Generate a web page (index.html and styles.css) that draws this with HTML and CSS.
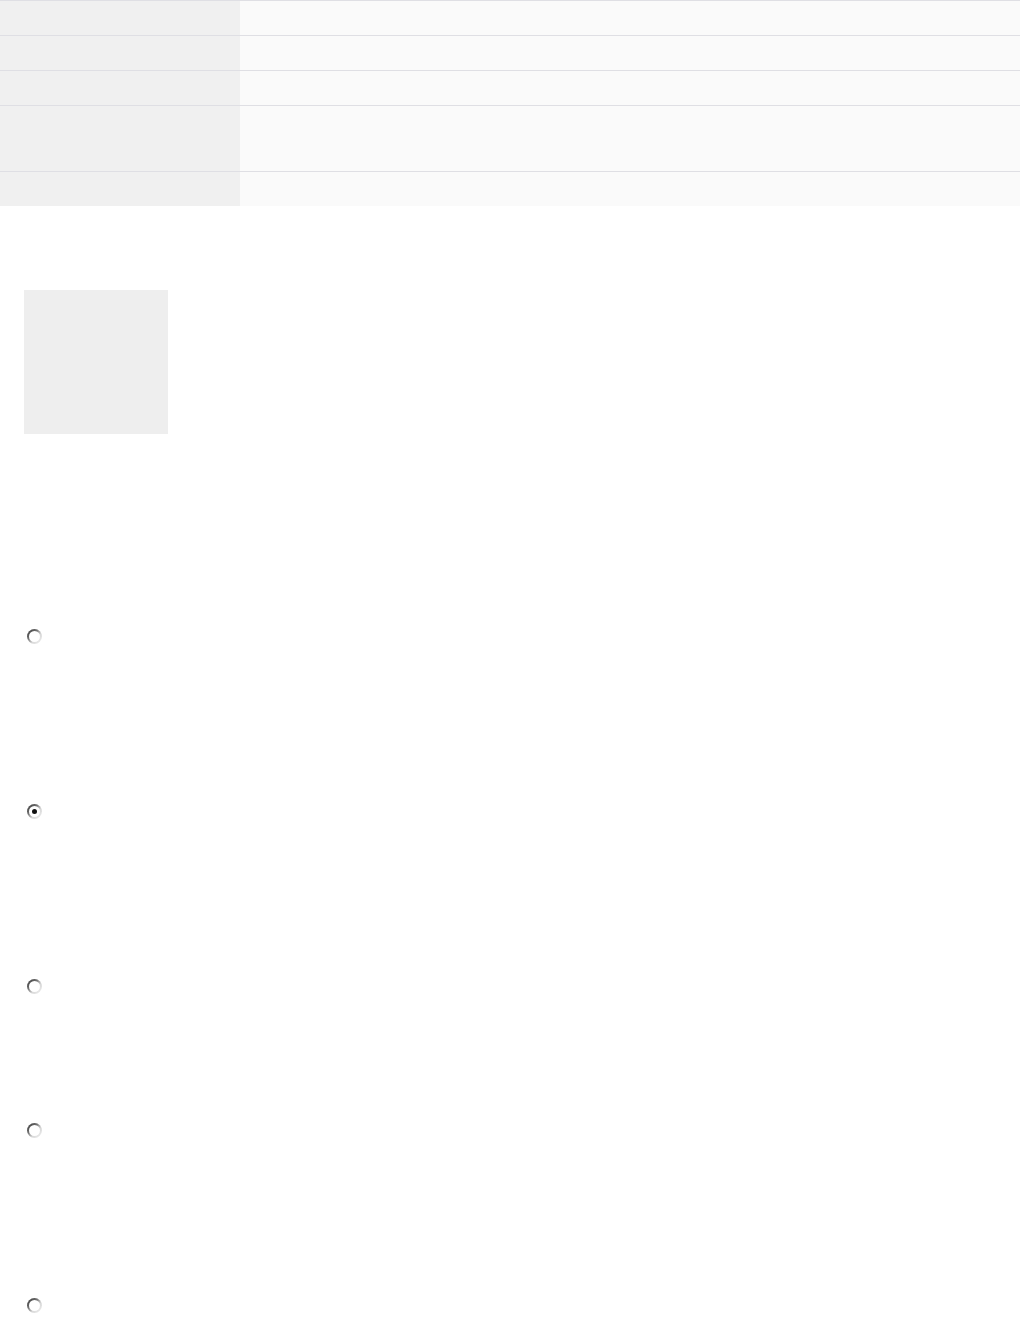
FILE: index.html
```html
<!DOCTYPE html>
<html lang="en">
<head>
  <meta charset="UTF-8" />
  <meta name="viewport" content="width=device-width, initial-scale=1.0"/>
  <title>Details</title>
  <link rel="stylesheet" href="styles.css">
</head>
<body>
  <div class="info-table">
    <div class="row"><div class="label"></div><div class="value"></div></div>
    <div class="row"><div class="label"></div><div class="value"></div></div>
    <div class="row"><div class="label"></div><div class="value"></div></div>
    <div class="row tall"><div class="label"></div><div class="value"></div></div>
    <div class="row"><div class="label"></div><div class="value"></div></div>
  </div>

  <div class="thumb"></div>

  <div class="options">
    <label class="option"><span class="radio"></span></label>
    <label class="option"><span class="radio checked"></span></label>
    <label class="option short"><span class="radio"></span></label>
    <label class="option"><span class="radio"></span></label>
    <label class="option last"><span class="radio"></span></label>
  </div>
</body>
</html>
```

FILE: styles.css
```css
body {
  font-family: 'Liberation Sans', Arial, sans-serif;
  background: #fff;
  margin: 0;
  padding: 0;
  color: #333;
}

.info-table {
  display: flex;
  flex-direction: column;
}

.row {
  display: grid;
  grid-template-columns: 240px 1fr;
  height: 35px;
  box-sizing: border-box;
  border-top: 1px solid #dfdfe4;
}

.row.tall {
  height: 66px;
}

.label {
  background: #f0f0f0;
}

.value {
  background: #fafafa;
}

.thumb {
  width: 144px;
  height: 144px;
  margin: 84px 0 0 24px;
  background: #eeeeee;
}

.options {
  margin-top: 195px;
  padding-left: 27px;
}

.option {
  display: block;
  height: 175px;
}

.option.short {
  height: 144px;
}

.option.last {
  height: auto;
}

.radio {
  display: block;
  position: relative;
  width: 15px;
  height: 15px;
  border-radius: 50%;
  background: linear-gradient(135deg, #333 0%, #6a6a6a 35%, #d8d8d8 62%, #f2f2f2 100%);
}

.radio::after {
  content: '';
  position: absolute;
  top: 2px;
  left: 2px;
  width: 11px;
  height: 11px;
  border-radius: 50%;
  background: #fff;
}

.radio.checked::before {
  content: '';
  position: absolute;
  top: 5px;
  left: 5px;
  width: 5px;
  height: 5px;
  border-radius: 50%;
  background: #111;
  z-index: 1;
}
```
